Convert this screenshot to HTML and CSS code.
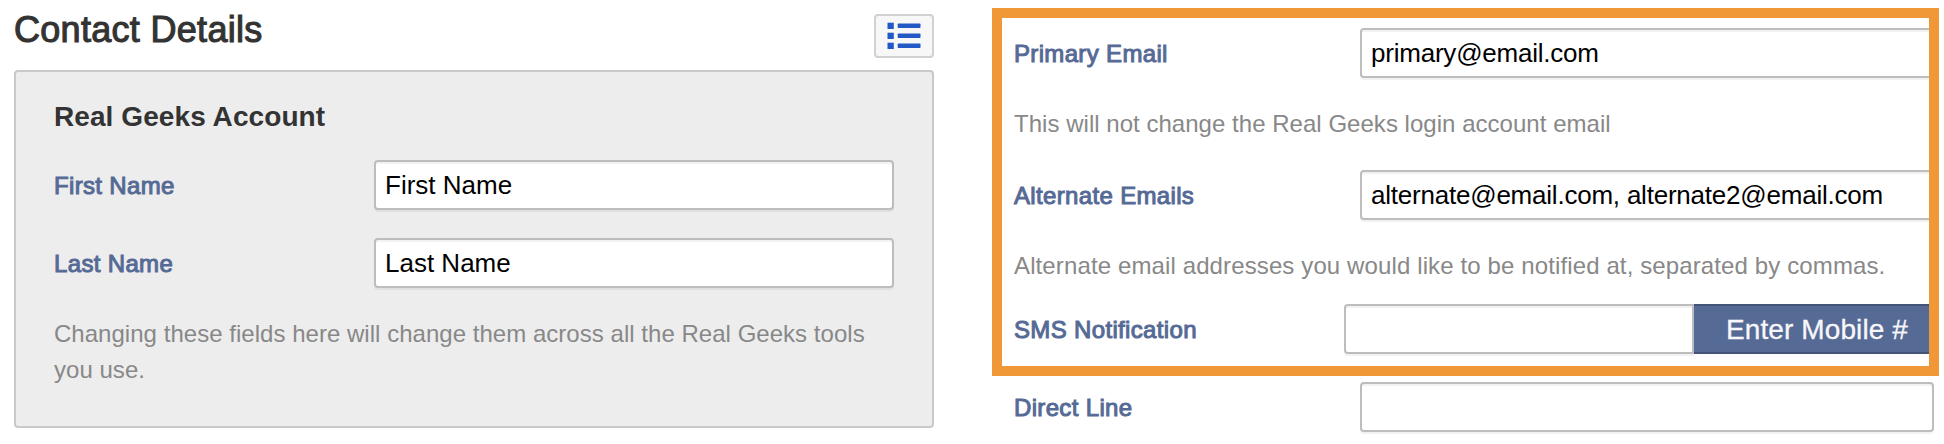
FILE: index.html
```html
<!DOCTYPE html>
<html lang="en">
<head>
  <meta charset="UTF-8" />
  <meta name="viewport" content="width=device-width, initial-scale=1.0" />
  <title>Contact Details</title>
  <link rel="stylesheet" href="styles.css">
</head>
<body>
  <section class="details">
    <header class="details-header">
      <h1>Contact Details</h1>
      <button type="button" class="list-button" aria-label="List">
        <svg width="34" height="28" viewBox="0 0 34 28" fill="#2259c5">
          <rect x="0.5" y="0.7" width="6.3" height="6.3" />
          <rect x="0.5" y="10.7" width="6.3" height="6.3" />
          <rect x="0.5" y="20.7" width="6.3" height="6.3" />
          <rect x="10.7" y="1.5" width="22.8" height="4.5" rx="0.8" />
          <rect x="10.7" y="11.5" width="22.8" height="4.5" rx="0.8" />
          <rect x="10.7" y="21.5" width="22.8" height="4.5" rx="0.8" />
        </svg>
      </button>
    </header>
    <div class="panel">
      <h2>Real Geeks Account</h2>
      <div class="row">
        <label for="firstName">First Name</label>
        <input type="text" id="firstName" value="First Name" />
      </div>
      <div class="row">
        <label for="lastName">Last Name</label>
        <input type="text" id="lastName" value="Last Name" />
      </div>
      <p class="help">Changing these fields here will change them across all the Real Geeks tools you use.</p>
    </div>
  </section>

  <section class="contact">
    <div class="highlight">
      <div class="row">
        <label for="primaryEmail">Primary Email</label>
        <input type="text" id="primaryEmail" value="primary@email.com" />
      </div>
      <p class="help primary-help">This will not change the Real Geeks login account email</p>
      <div class="row">
        <label for="alternateEmails">Alternate Emails</label>
        <input type="text" id="alternateEmails" value="alternate@email.com, alternate2@email.com" />
      </div>
      <p class="help alternate-help">Alternate email addresses you would like to be notified at, separated by commas.</p>
      <div class="row sms-row">
        <label for="sms">SMS Notification</label>
        <input type="text" id="sms" />
        <button type="button" class="mobile-button">Enter Mobile #</button>
      </div>
    </div>
    <div class="row direct-row">
      <label for="directLine">Direct Line</label>
      <input type="text" id="directLine" />
    </div>
  </section>
</body>
</html>
```

FILE: styles.css
```css
* { box-sizing: border-box; }
body { display: flex; gap: 58px; height: 444px; margin: 0; padding-left: 14px; overflow: hidden; background: #fff; color: #333; font-family: "Liberation Sans", Arial, sans-serif; }
h1, h2, p { margin: 0; }

.details { width: 920px; }
.details-header { display: flex; justify-content: space-between; height: 70px; padding-top: 10px; }
h1 { font-size: 36px; font-weight: 400; line-height: 40px; letter-spacing: 0.3px; -webkit-text-stroke: 1.1px #333; }
.list-button { display: flex; align-items: flex-start; justify-content: center; width: 60px; height: 44px; margin-top: 4px; padding: 6px 0 0 0; background: #f7f7f7; border: 2px solid #d1d1d1; border-radius: 4px; }

.panel { height: 358px; padding: 27px 38px 0; background: #ededed; border: 2px solid #c9c9c9; border-radius: 4px; }
h2 { margin-bottom: 25px; font-size: 28px; line-height: 36px; letter-spacing: 0.08px; }

.row { display: flex; align-items: center; margin-bottom: 28px; }
label { flex: none; padding-top: 2px; color: #556a95; font-size: 24px; line-height: 36px; letter-spacing: 0.34px; -webkit-text-stroke: 1px #556a95; }
input { flex: none; height: 50px; padding: 0 9px; background: #fff; border: 2px solid #bdbdbd; border-radius: 4px; box-shadow: 0 2px 0 rgba(0, 0, 0, 0.05), inset 0 2px 0 rgba(0, 0, 0, 0.05); color: #000; font: 26px "Liberation Sans", Arial, sans-serif; }
.panel label { width: 320px; }
.panel input { width: 520px; }
.help { color: #888; font-size: 24px; line-height: 36px; letter-spacing: 0.03px; }

.contact { flex: none; width: 947px; padding-top: 8px; }
.contact label { width: 346px; }
.contact input { width: 574px; letter-spacing: -0.22px; }
.highlight { height: 368px; padding: 10px 0 0 12px; border: 10px solid #f09737; overflow: hidden; }
.primary-help { margin-bottom: 28px; }
.alternate-help { margin-bottom: 20px; letter-spacing: 0.12px; }
.sms-row label { width: 330px; }
.sms-row input { width: 350px; border-radius: 4px 0 0 4px; }
.mobile-button { flex: none; width: 250px; height: 50px; padding: 2px 0 0 32px; background: #556a95; border: 2px solid #435478; border-width: 2px 0; color: #f7f7fa; font: 28px "Liberation Sans", Arial, sans-serif; letter-spacing: 0.1px; text-align: left; -webkit-text-stroke: 0.3px #f7f7fa; }
.direct-row { margin: 6px 0 0 22px; }
```
